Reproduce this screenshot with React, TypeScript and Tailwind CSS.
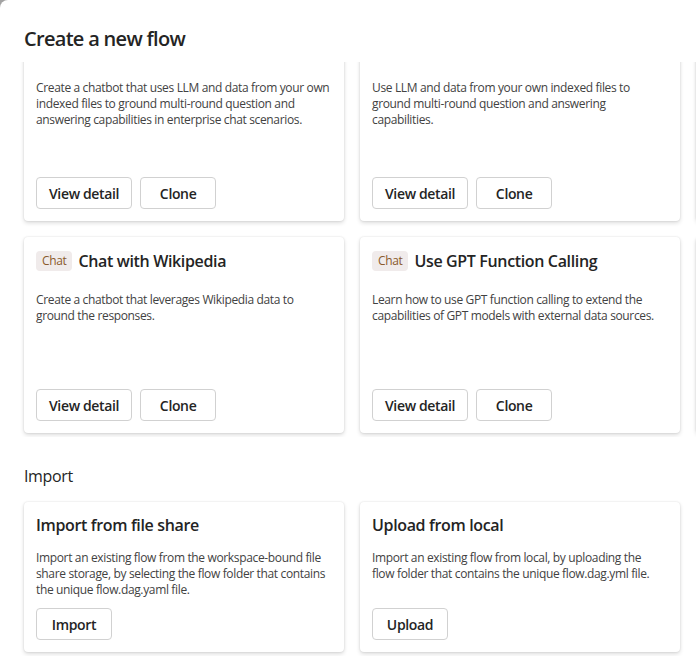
import React from 'react'

type Flow = {
  tag?: string
  title: string
  desc: string
}

const FLOWS: Flow[] = [
  {
    tag: 'Chat',
    title: 'Q&A on your data',
    desc: 'Create a chatbot that uses LLM and data from your own indexed files to ground multi-round question and answering capabilities in enterprise chat scenarios.',
  },
  {
    tag: 'Chat',
    title: 'Multi-round Q&A on your data',
    desc: 'Use LLM and data from your own indexed files to ground multi-round question and answering capabilities.',
  },
  {
    tag: 'Chat',
    title: 'Bring your own data Chat QnA',
    desc: 'Create a chatbot that uses your own data.',
  },
  {
    tag: 'Chat',
    title: 'Chat with Wikipedia',
    desc: 'Create a chatbot that leverages Wikipedia data to ground the responses.',
  },
  {
    tag: 'Chat',
    title: 'Use GPT Function Calling',
    desc: 'Learn how to use GPT function calling to extend the capabilities of GPT models with external data sources.',
  },
  {
    tag: 'Chat',
    title: 'Chat with PDF',
    desc: 'Ask questions about the content of a PDF file.',
  },
]

const IMPORTS = [
  {
    title: 'Import from file share',
    desc: 'Import an existing flow from the workspace-bound file share storage, by selecting the flow folder that contains the unique flow.dag.yaml file.',
    action: 'Import',
  },
  {
    title: 'Upload from local',
    desc: 'Import an existing flow from local, by uploading the flow folder that contains the unique flow.dag.yml file.',
    action: 'Upload',
  },
]

const card =
  'flex flex-col bg-white rounded-[4px] p-3 shadow-[0_0_2px_rgba(0,0,0,0.12),0_2px_4px_rgba(0,0,0,0.14)]'

const desc = 'text-[12px] leading-4 text-[#424242]'

function Button({ children }: { children: React.ReactNode }) {
  return (
    <button className="h-8 min-w-[76px] px-3 rounded-[4px] border border-[#d1d1d1] bg-white text-[14px] font-semibold text-[#242424]">
      {children}
    </button>
  )
}

function FlowCard({ flow }: { flow: Flow }) {
  return (
    <div className={`${card} h-[196px]`}>
      <div className="flex items-center gap-[6px] h-6">
        {flow.tag && (
          <span className="h-5 px-[6px] rounded-[4px] bg-[#f0ebeb] text-[12px] leading-5 text-[#8a5a2b]">
            {flow.tag}
          </span>
        )}
        <span className="text-[16px] leading-[22px] font-semibold text-[#242424]">{flow.title}</span>
      </div>
      <p className={`mt-[19px] ${desc}`}>{flow.desc}</p>
      <div className="mt-auto flex gap-2">
        <Button>View detail</Button>
        <Button>Clone</Button>
      </div>
    </div>
  )
}

export default function App() {
  return (
    <div className="w-[696px] h-[656px] overflow-hidden bg-[#a3a3a3] tracking-[-0.022em] font-['Segoe_UI','Open_Sans',sans-serif]">
      <div className="h-full bg-white rounded-tl-[8px]">
        <h1 className="pt-[25px] pl-6 text-[20px] leading-7 font-semibold tracking-[-0.035em] text-[#242424]">
          Create a new flow
        </h1>

        <div className="mt-[9px] h-[375px] overflow-hidden">
          <div className="-mt-[37px] px-6 grid grid-cols-[320px_320px_320px] gap-4">
            {FLOWS.map((f) => (
              <FlowCard key={f.title} flow={f} />
            ))}
          </div>
        </div>

        <h2 className="mt-[28px] pl-6 text-[16px] leading-[22px] font-medium text-[#242424]">Import</h2>

        <div className="mt-[15px] px-6 grid grid-cols-[320px_320px] gap-4">
          {IMPORTS.map((i) => (
            <div key={i.title} className={`${card} h-[150px]`}>
              <span className="text-[16px] leading-[22px] font-semibold text-[#242424]">{i.title}</span>
              <p className={`mt-[14px] pr-[5px] ${desc}`}>{i.desc}</p>
              <div className="mt-auto">
                <Button>{i.action}</Button>
              </div>
            </div>
          ))}
        </div>
      </div>
    </div>
  )
}
